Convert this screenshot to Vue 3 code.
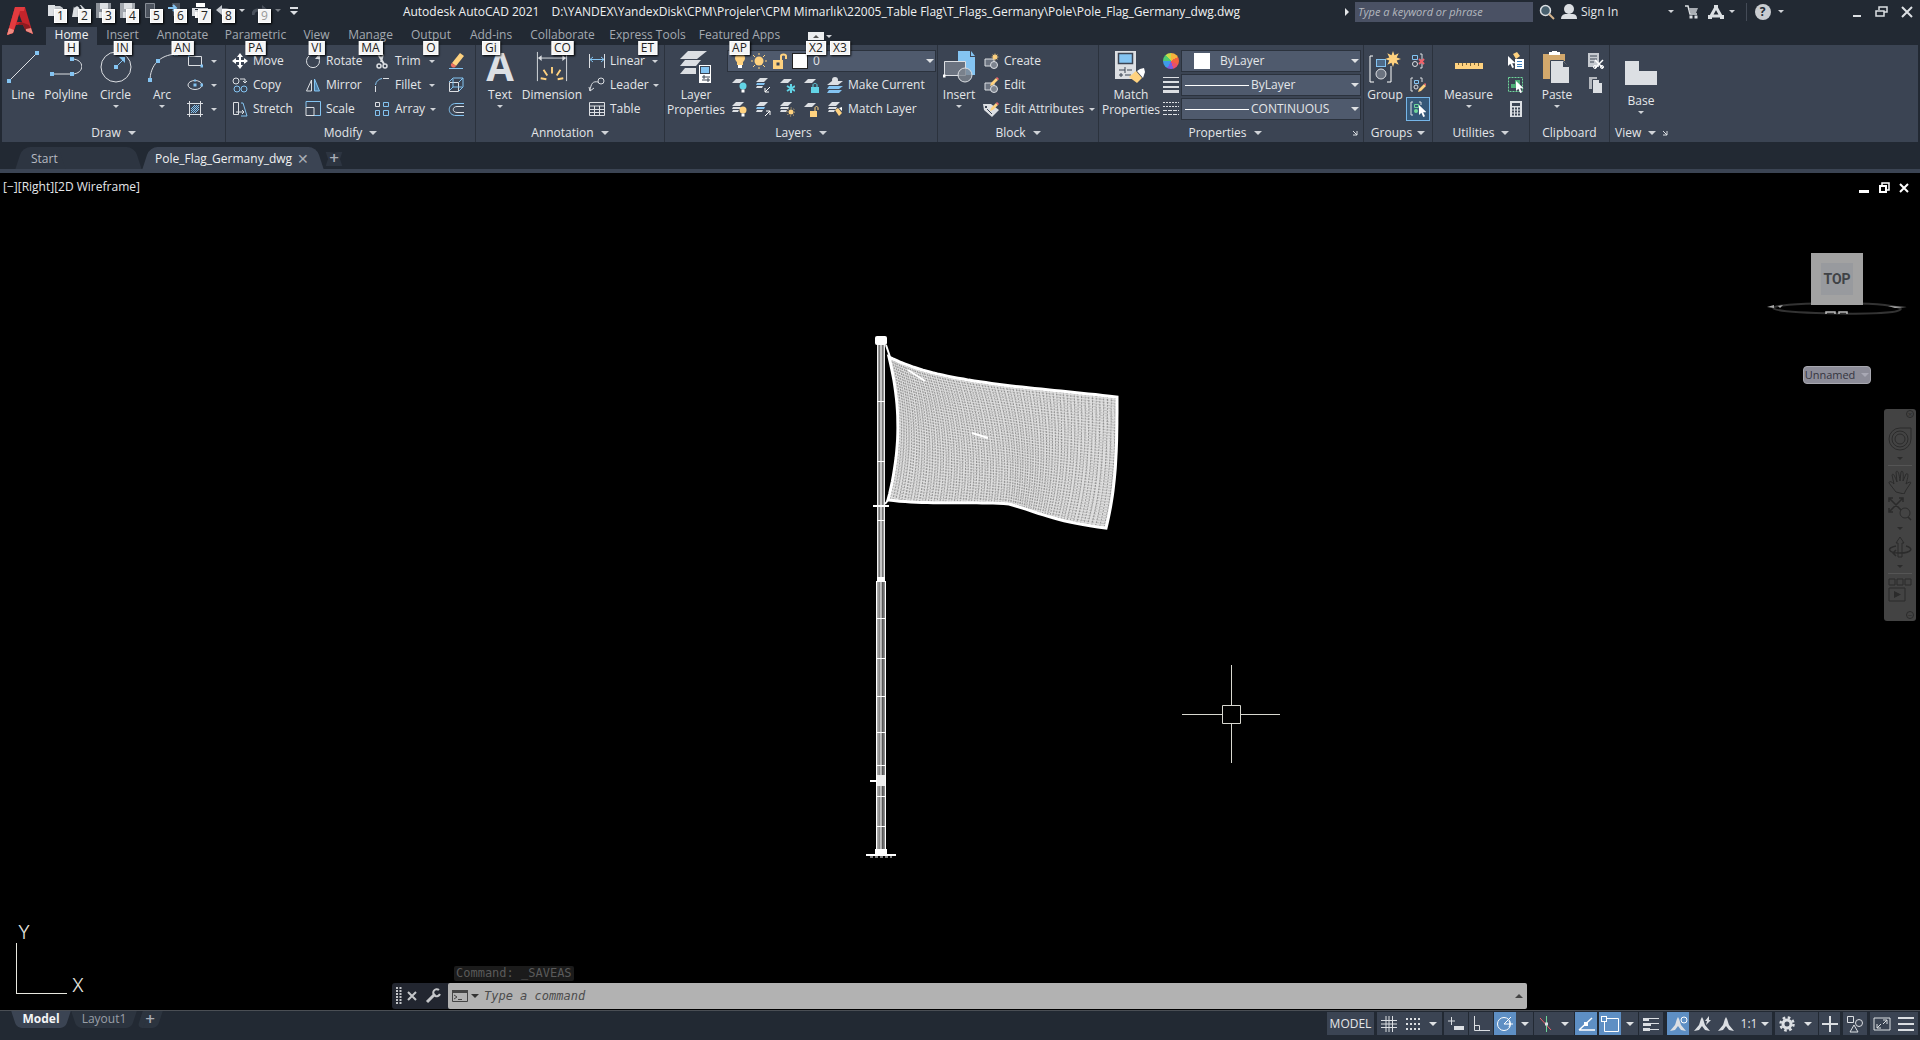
<script setup>
import { h } from 'vue'

const W = '#dcdfe3'
const B = '#84c4f2'
const Y = '#ffd27f'
const G = '#6fd79a'
const R = '#f0626a'
const C = '#62d4e6'
const D = '#3b4453'

const dot = (x, y, c = B, s = 4) => `<rect x="${x - s / 2}" y="${y - s / 2}" width="${s}" height="${s}" fill="${c}"/>`
const line = (d, c = W, w = 1) => `<path d="${d}" stroke="${c}" stroke-width="${w}"/>`
const fill = (d, c = W) => `<path d="${d}" fill="${c}"/>`
const sheet = (y, c = W) => fill(`M5 ${y}h8l-4 4h-8z`, c)
const sheets = (c = W) => fill('M5 1h8l-4 4H1z', W) + fill('M2 6h8l-1 2H1z', c) + fill('M2 9h6l-1 2H1z', W)
const star = (x, y, r, c = Y) => {
  let d = ''
  for (let i = 0; i < 16; i++) {
    const a = (i * Math.PI) / 8
    const q = i % 2 ? r * 0.5 : r
    d += `${i ? 'L' : 'M'}${(x + q * Math.sin(a)).toFixed(1)} ${(y - q * Math.cos(a)).toFixed(1)}`
  }
  return fill(d + 'z', c)
}
const pencil = (x, y) =>
  fill(`M${x} ${y}l1-3 5-5 2 2-5 5z`, Y) + fill(`M${x + 6} ${y - 8}l1-1 2 2-1 1z`, R)
const cursor = (x, y) => fill(`M${x} ${y}v10l2.4-2.2 1.8 4.2 1.8-.8-1.8-4h3.4z`, '#fff')
const blockShape =
  `<path d="M2 6h9v7H2z" fill="#6b7380" stroke="${W}"/><circle cx="11" cy="12" r="3.5" fill="#7d848f" stroke="${W}"/>`
const annot = (extra) => fill('M10 1c2 3 2 6 3 8l5 6-5-1-3-4-3 4-5 1 5-6c1-2 1-5 3-8z') + extra

const icons = {
  logo: [26, 28,
    fill('M8 0h10l8 27-7-3-3-6h-7l-3 8-6 2z', '#c4242b') + fill('M12 7l3 8h-5z', '#222933') +
    fill('M8 0l-8 28 6-2L13 4l4 0 1-4z', '#e23b3f') + fill('M16 18l-6 0 4-3 8 3 4 9-7-3z', '#8e1b20') + fill('M0 28l2-7 5 2-1 3z', '#f08a80') + fill('M26 27l-2-6-5 1 0 2z', '#ee8a82')],
  new: [16, 16, fill('M0 2h7v11H0z') + fill('M7 3h5l3 2v9H7z', '#c8ccd1')],
  open: [16, 16, fill('M2 3l7-1 5 5-8 7H0z') + line('M2 4c3-3 6-2 7 3', '#222933', 2)],
  save: [16, 16, fill('M0 0h15v15H0z', '#8c9199') + fill('M4 0h8v6H4z') + fill('M3 9h10v6H3z')],
  saveas: [16, 16, fill('M0 0h15v15H0z', '#a3a8af') + fill('M4 0h8v6H4z') + fill('M3 9h10v6H3z') + line('M7 14l7-8', '#ffffff', 2)],
  mobile: [16, 16, '<path d="M1.500.500h9v14h-9z" fill="#4c535e" stroke="#878d96"/>'],
  cloud: [16, 16, fill('M4 0h8v13H5z', '#4c535e') + line('M0 5h7M5 2l3 3-3 3', B, 2)],
  print: [16, 16, fill('M4 0h9v4H4z', '#fff') + fill('M0 5h16v8H0z') + line('M3 6.500h10', '#222933') + fill('M3 9h10v6H3z', '#fff')],
  undo: [16, 16, fill('M0 7l6-5v10z', '#c4c8ce') + line('M5 7h5c3 0 5 1 5 5', '#c4c8ce', 3)],
  redo: [16, 16, fill('M16 7l-6-5v10z', '#4a515c') + line('M11 7H6c-3 0-5 1-5 5', '#4a515c', 3)],
  custom: [10, 10, fill('M1 1h8v2H1z') + fill('M1 5h8L5 9z')],
  search: [16, 16, `<circle cx="6.500" cy="6.500" r="5" fill="#48606e" stroke="${W}" stroke-width="1.500"/>` + line('M10 10l5 5', '#d5b48c', 2)],
  user: [18, 16, `<circle cx="9" cy="5" r="5" fill="${W}"/>` + fill('M1 15c0-4 3-5 5-5h6c3 0 5 1 5 5z')],
  cart: [14, 14, line('M0 1h3l2 8h7', W, 1.5) + fill('M4 3h9l-2 5H5z', '#a9adb3') + dot(6, 12, W, 3) + dot(11, 12, W, 3)],
  app: [16, 14, line('M8 2L3 11h10z', W, 3) + dot(8, 2, W, 4) + dot(2, 12, W, 4) + dot(14, 12, W, 4)],
  min: [10, 12, fill('M1 9h8v2H1z')],
  restore: [13, 12, `<path d="M4 4V1h8v5H9M1 5h8v5H1z" stroke="${W}" stroke-width="1.500"/>`],
  close: [12, 12, line('M1 1l10 10M11 1L1 11', W, 2)],
  line: [32, 32, line('M2 30L30 2', W) + dot(2, 30) + dot(30, 2)],
  polyline: [32, 32, line('M2 23h20c13 0 13-15 0-15', W) + dot(2, 23) + dot(22, 23) + dot(22, 8)],
  circle: [32, 32, `<circle cx="16" cy="16" r="15" stroke="${W}"/>` + line('M16 16l7-7', B) + fill('M25 6v6l-6-6z', B) + dot(16, 16)],
  arc: [32, 32, line('M4 30C4 14 14 4 30 3', W) + dot(4, 29) + dot(12, 10) + dot(30, 3)],
  rect: [16, 16, line('M1.500 3.500h13v9h-13z') + dot(2, 3, B, 2) + dot(15, 13, B, 3)],
  ellipse: [16, 16, `<ellipse cx="8" cy="8" rx="7" ry="4.500" stroke="${W}"/>` + dot(8, 8, B, 3) + dot(15, 8, B, 3) + dot(8, 3.5, B, 2)],
  hatch: [16, 16, line('M0 2.500h16M0 13.500h16M2.500 0v16M13.500 0v16') + line('M4 8l4-4M4 12l8-8M8 12l4-4M4 10l6-6M6 12l6-6', B)],
  move: [16, 16, line('M8 2v12M2 8h12', '#fff', 2) + fill('M8 0l3 4H5zM8 16l3-4H5zM0 8l4-3v6zM16 8l-4-3v6z', '#fff')],
  copy: [16, 16, `<circle cx="4" cy="4" r="3" stroke="${W}"/><circle cx="5" cy="12" r="3" stroke="${B}"/><circle cx="12" cy="12" r="3" stroke="${B}"/>` + line('M8 2h5v4M11 4l2 2 2-2')],
  stretch: [16, 16, line('M1.500 1.500h5v12h-5zM4 11h8M10 9l2 2-2 2') + line('M9 2h2l4 13H9', B)],
  rotate: [16, 16, line('M4 3a6.500 6.500 0 1 0 8 0', W) + fill('M15 0v6h-5z')],
  mirror: [16, 16, line('M6.500 3v11h-5z') + `<path d="M9.500 2v12h5z" stroke="${B}" fill="#4e7fa6"/>`],
  scale: [16, 16, line('M1 6.500V.5h14.500v14H9', B) + line('M1 6.500h8v8H1z')],
  trim: [16, 16, line('M4 1l6 10M9 1L7 9', W, 2) + `<circle cx="5" cy="13" r="2" stroke="${W}" stroke-width="1.500"/><circle cx="11" cy="13" r="2" stroke="${W}" stroke-width="1.500"/>`],
  fillet: [16, 16, line('M1.500 15V9M9 1.500h6') + line('M1.500 8C2 4 5 2 8 1.500', B)],
  array: [16, 16, line('M1.500 1.500h4v4h-4z') + line('M9.500 1.500h5v4h-5zM1.500 9.500h4v5h-4zM9.500 9.500h5v5h-5z', B)],
  erase: [16, 16, fill('M4 10l8-10 4 3-8 10z', Y) + fill('M4 10l4 3c-2 3-6 1-5-2z', '#f07060') + line('M1 15.500h14', B)],
  explode: [16, 16, line('M1.500 5.500h9v9h-9z') + line('M1 5l4-4h10v9l-4 4M11 5l4-4M5 2v8h9M5 10l-3 3', B)],
  offset: [16, 16, line('M16 5.500H9c-5 0-5 6 0 6h7') + line('M16 2.500H8c-9 0-9 12 0 12h8', B)],
  text: [28, 32, `<text x="14" y="30" font-family="Open Sans, sans-serif" font-weight="700" font-size="40" text-anchor="middle" fill="${W}">A</text>`],
  dimension: [34, 34, line('M1.500 1v31M32.500 1v31M3 7.500h28') + fill('M2 7.500l4-3v6zM32 7.500l-4-3v6z') + line('M17 17v7M8 20l4 6M26 20l-4 6M5 29l6 1M29 29l-6 1', Y, 2)],
  linear: [18, 16, line('M1.500 1v14M16.500 1v14') + line('M2 6.500h14M5 4L2 6.500 5 9M13 4l3 2.500L13 9', B)],
  leader: [18, 16, line('M2 14C3 6 5 4 10 5M2 14l-1-4M2 14l4-3') + `<circle cx="13" cy="4" r="3" stroke="${W}"/>`],
  table: [18, 16, line('M1.500 1.500h15v13h-15zM1 5h16M1 8.500h16M1 11.500h16M6.500 5v10M11.500 5v10')],
  layerprops: [32, 32, fill('M8 0h19L17 8H0z') + fill('M5 9h16l-5 6H0z') + fill('M5 17h11v6H0z') +
    `<rect x="19" y="14" width="12" height="18" fill="#fff"/><rect x="20.500" y="15.500" width="9" height="7" fill="${B}" stroke="${D}"/>` + line('M22 26h8M22 29h8M24 24v4M28 27v4', D)],
  bulb: [12, 16, `<circle cx="6" cy="5" r="5" fill="${Y}"/>` + fill('M3 9h6v3H3z', Y) + fill('M4 12h4v3H4z', '#fff')],
  sun: [16, 16, `<circle cx="8" cy="8" r="4.500" fill="${Y}"/>` + line('M8 0v2M8 14v2M0 8h2M14 8h2M2 2l2 2M12 12l2 2M14 2l-2 2M4 12l-2 2', Y)],
  unlock: [16, 16, fill('M1 7h10v9H1z', Y) + line('M9 7V3c0-2 5-2 5 0v3', Y, 2) + dot(6, 11, D, 3)],
  loff: [16, 16, sheet(2) + `<circle cx="12" cy="9" r="3.500" fill="${C}"/>` + dot(12, 14, '#fff', 3)],
  liso: [16, 16, sheets(B) + line('M15 10l-5 5M10 11v4h4', '#fff')],
  lfreeze: [16, 16, sheet(2) + line('M12 7v9M8 9l8 5M16 9l-8 5', C, 2)],
  llock: [16, 16, sheet(2) + fill('M8 10h8v6H8z', C) + line('M10 10V8c0-2 4-2 4 0v2', C)],
  lcur: [16, 16, fill('M5 4h11l-5 4H0z') + fill('M2 9h14l-4 3H0z', B) + fill('M2 13h13l-3 3H0z', B) + `<circle cx="8" cy="3" r="3" fill="${W}"/>`],
  lon: [16, 16, sheets() + `<circle cx="12" cy="9" r="3.500" fill="${Y}"/>` + dot(12, 14, '#fff', 3)],
  luniso: [16, 16, sheets(B) + line('M10 15l5-5M11 10h4v4', '#fff')],
  lthaw: [16, 16, sheets() + `<circle cx="12" cy="11" r="2.500" fill="${Y}"/><circle cx="12" cy="11" r="4" stroke="${Y}" stroke-dasharray="1 2"/>`],
  lunlock: [16, 16, sheet(2) + fill('M7 10h7v6H7z', Y) + line('M12 10V7c0-2 3-2 3 0v2', Y)],
  lmatch: [16, 16, sheets() + fill('M8 9l3-2 4 5-3 3z', Y) + fill('M12 7l3-1 0 4z', '#fff')],
  insert: [32, 32, fill('M15 0h12v6h5v18H15z', B) + fill('M28 0l4 5h-4z', B) + `<path d="M1.500 10.500h21v14h-21z" fill="#6b7380" stroke="${W}"/><circle cx="22" cy="24" r="7" fill="#7d848f" fill-opacity=".8" stroke="${W}"/>` + dot(1, 25, '#fff', 3)],
  create: [16, 16, blockShape + star(12, 4, 4)],
  edit: [16, 16, blockShape + pencil(7, 9)],
  editattr: [16, 16, fill('M0 3h8l8 6-7 7-8-7z') + line('M4 8l5 5', D) + dot(3, 6, D, 2) + pencil(7, 10)],
  matchprops: [32, 32, fill('M0 0h21v28H0z') + `<rect x="3.500" y="2.500" width="14" height="10" fill="${B}" stroke="${D}" stroke-width="1.500"/>` + line('M4 19h6M12 19h5M4 24h4M10 24h6M10 16v6M6 22v4', D) + fill('M14 26l7-6 6 7-5 5z', Y) + fill('M22 20l3-2 4-1 1 4-2 6z', '#fff')],
  weights: [16, 16, fill('M0 0h16v1H0zM0 4h16v2H0zM0 9h16v2H0zM0 13h16v3H0z')],
  types: [16, 16, `<path d="M0 1.500h16M0 5.500h16" stroke="${W}" stroke-dasharray="2 1"/><path d="M0 9.500h16M0 13.500h16" stroke="${W}" stroke-dasharray="4 1"/>`],
  group: [32, 32, line('M4 5H1v26h4M18 31h4V15', '#fff') + `<rect x="7.500" y="8.500" width="9" height="7" fill="#4e6a88" stroke="${B}"/><circle cx="12" cy="23" r="5" fill="#6b7380" stroke="${W}"/>` + star(24, 8, 8)],
  ungroup: [16, 16, line('M2.500 2.500h5v4h-5z', B) + `<circle cx="5" cy="11" r="2.500" stroke="${W}"/>` + line('M10 1h2v14h-2') + line('M9 6l5 5M14 6l-5 5', R, 2)],
  groupedit: [16, 16, line('M3 1H1v13h2M10 1h2v4') + line('M4.500 3.500h4v3h-4z', B) + `<circle cx="6" cy="10" r="2" stroke="${W}"/>` + pencil(8, 15)],
  groupsel: [16, 16, line('M3 1H1v13h2M9 1h2v3') + line('M4.500 3.500h4v3h-4z', G) + `<circle cx="6" cy="10" r="2" fill="${G}"/>` + cursor(9, 4)],
  measure: [30, 16, fill('M1 4h28v6H1z', Y) + line('M4.500 4v2M8.500 4v3M12.500 4v2M16.500 4v3M20.500 4v2M24.500 4v3', '#7a6439')],
  quicksel: [18, 18, fill('M6 2l4-2 3 4-4 3z', Y) + cursor(1, 4) + `<rect x="8" y="7" width="9" height="10" fill="#fff"/>` + line('M10 9.500h5M10 12.500h5M10 14.500h5', '#3a7fc0')],
  selall: [18, 18, `<path d="M1.500 1.500h14v14h-14z" stroke="${G}" stroke-dasharray="2 1"/>` + fill('M4 8h4V4h5v8H4z', '#4fae78') + cursor(9, 5)],
  calc: [14, 18, fill('M1 1h12v16H1z') + fill('M3 3h8v3H3z', D) + line('M3 8.500h8M3 11.500h8M3 14.500h8', D, 2) + line('M5.500 7v9M8.500 7v9', W)],
  paste: [28, 32, fill('M0 3h22v25H0z', '#d2a86c') + fill('M6 4h11V1h-3V0H9v1H6z', '#fff') + `<path d="M7.500 9.500h13l6 6v17h-19z" fill="${W}" stroke="${D}"/>` + fill('M20 10v6h7z', D)],
  cut: [18, 18, fill('M1 1h11v14H1z', '#c6cad0') + line('M3 4h7M3 7h7M3 10h4', D) + line('M8 8l8 8M16 8l-8 8', '#fff', 1.5) + `<circle cx="8" cy="15" r="1.500" stroke="#fff"/><circle cx="15" cy="15" r="1.500" stroke="#fff"/>`],
  copyclip: [14, 18, fill('M0 1h8v12H0z', '#b3b7bd') + `<path d="M3.500 3.500h7l3 3v11h-10z" fill="${W}" stroke="${D}"/>` + fill('M10 3v4h4z', D)],
  base: [32, 24, fill('M0 0h14v10h18v14H0z')],
  launcher: [6, 6, line('M1 1l4 4M5 1v4H1')],
  vrestore: [12, 12, `<path d="M4 3V1h7v7H9" stroke="#fff" stroke-width="1.500"/><path d="M2 4h6v6H2z" stroke="#fff" stroke-width="2"/>`],
  vmin: [12, 12, fill('M1 8h10v3H1z', '#fff')],
  vclose: [12, 12, line('M2 2l8 8M10 2l-8 8', '#fff', 2)],
  wheel: [24, 24, '<path d="M12 1h11v11A11 11 0 1 1 12 1z" stroke="#2b2b2b"/><circle cx="12" cy="12" r="8" stroke="#2b2b2b"/><circle cx="12" cy="12" r="5" stroke="#2b2b2b"/>'],
  hand: [24, 24, '<path d="M8 22L1 13c0-2 2-2 5 1L4 5c1-2 2-1 5 7L8 2c1-2 3-1 4 9l1-9c1-2 3-1 2 9l3-7c2-1 3 0 0 10 4-3 6-2 4 0l-4 6-2 4z" stroke="#2b2b2b"/>'],
  zoomext: [24, 24, '<path d="M1 1l14 14M15 1L1 15M1 5V1h4M11 1h4v4M1 11v4h4M19 19l4 4" stroke="#2b2b2b" stroke-width="1.500"/><circle cx="17" cy="16" r="5" fill="#444" stroke="#2b2b2b"/>'],
  orbit: [24, 24, '<path d="M10 22V8H8l4-6 4 6h-2v14z" stroke="#2b2b2b"/><path d="M8 11C-2 13 0 18 12 18s14-5 6-7M8 15l-3 3 3 3" stroke="#2b2b2b" stroke-width="1.500"/>'],
  motion: [24, 24, '<path d="M1 1h6v6H1zM9 1h6v6H9zM17 1h6v6h-6zM1 10h16v13H1z" stroke="#2b2b2b"/><path d="M6 13v7l7-3.500z" fill="#2b2b2b"/>'],
  wrench: [16, 16, line('M2 14l8-8', '#c4c6c9', 3) + `<path d="M14 2a3.500 3.500 0 1 0 1 4" stroke="#c4c6c9" stroke-width="2"/>`],
  cmdclose: [10, 10, line('M1 1l8 8M9 1L1 9', '#c4c6c9', 2)],
  grip: [6, 18, '<path d="M1 0v18M4.500 0v18" stroke="#c4c6c9" stroke-width="2" stroke-dasharray="2 1"/>'],
  prompt: [16, 12, '<path d="M.5.500h15v11H.500z" stroke="#444"/><path d="M0 0h16v3H0z" fill="#444"/><path d="M2 5l3 2-3 2M6 9.500h4" stroke="#444"/>'],
  sgrid: [16, 16, line('M5 0v16M8 0v16M11.500 0v16M0 4.500h16M0 8h16M0 11.500h16')],
  ssnap: [14, 14, [1, 5, 9, 13].map((x) => [2, 7, 12].map((y) => dot(x, y, W, 2)).join('')).join('')],
  sdyn: [18, 16, line('M1 5h7M4.500 1v8') + fill('M7 10h10v4H7z')],
  sortho: [18, 18, line('M2.500 1v14.500H18M2.500 10.500h5v5')],
  spolar: [18, 18, `<circle cx="8" cy="9" r="6.500" stroke="#fff"/>` + line('M8 9h9M8 9l7-7M13 6c1 2 1 4 0 6', '#fff')],
  siso: [14, 16, line('M2 2l11 12', R) + line('M8.500 0v16', G) + dot(8.5, 8, W, 3)],
  strack: [18, 16, line('M2 14h16M2 14L15 2', '#fff', 1.5) + dot(9, 8, '#fff', 4)],
  sosnap: [18, 18, line('M3.500 3.500h14v13h-14z', '#fff') + `<rect x=".5" y="1.500" width="5" height="5" fill="#5e8fc4" stroke="#fff"/>`],
  slwt: [18, 16, fill('M1 2h6v3H1zM7 2h10v1H7zM1 7h8v3H1zM9 7h8v1H9zM1 12h7v3H1zM8 13h9v1H8z')],
  sann: [20, 16, annot(`<circle cx="16" cy="4" r="3" stroke="#fff" fill="#5e8fc4"/>`)],
  sann2: [20, 16, annot(fill('M17 0l-4 5h2l-1 4 5-5h-2z'))],
  sann3: [20, 16, annot('')],
  sgear: [16, 16, `<circle cx="8" cy="8" r="4" stroke="${W}" stroke-width="3"/><circle cx="8" cy="8" r="6.500" stroke="${W}" stroke-width="2.500" stroke-dasharray="2.600 2.500"/>`],
  splus: [18, 18, line('M9 1v16M1 9h16', W, 2)],
  sshapes: [18, 18, `<path d="M1.500 1.500h6v6h-6zM8 10l4 7H4z" stroke="${W}"/><circle cx="13" cy="8" r="3.500" stroke="${W}"/>`],
  sclean: [18, 14, line('M1 1h16v12H1z') + line('M4 11l4-4M14 3l-4 4M4 7v4h4M10 3h4v4')],
  smenu: [18, 16, fill('M1 1h16v2H1zM1 7h16v2H1zM1 13h16v2H1z')],
}

const Icon = (props) => {
  const [w, hgt, body] = icons[props.name]
  return h('svg', {
    viewBox: `0 0 ${w} ${hgt}`, width: w, height: hgt, fill: 'none',
    'aria-hidden': 'true', innerHTML: body,
  })
}
Icon.props = ['name']

const quick = [
  ['new', 'New', '1'], ['open', 'Open', '2'], ['save', 'Save', '3'], ['saveas', 'Save As', '4'],
  ['mobile', 'Open from Web', '5'], ['cloud', 'Save to Web', '6'], ['print', 'Plot', '7'], ['undo', 'Undo', '8'],
]
const tabs = [
  ['Home', 'H'], ['Insert', 'IN'], ['Annotate', 'AN'], ['Parametric', 'PA'], ['View', 'VI'], ['Manage', 'MA'],
  ['Output', 'O'], ['Add-ins', 'Gi'], ['Collaborate', 'CO'], ['Express Tools', 'ET'], ['Featured Apps', 'AP'],
]
const modify = [
  [['move', 'Move'], ['copy', 'Copy'], ['stretch', 'Stretch']],
  [['rotate', 'Rotate'], ['mirror', 'Mirror'], ['scale', 'Scale']],
  [['trim', 'Trim', 1], ['fillet', 'Fillet', 1], ['array', 'Array', 1]],
]
const annotation = [['linear', 'Linear', 1], ['leader', 'Leader', 1], ['table', 'Table']]
const block = [['create', 'Create'], ['edit', 'Edit'], ['editattr', 'Edit Attributes', 1]]
const layerTools = [
  [['loff', 'Off'], ['liso', 'Isolate'], ['lfreeze', 'Freeze'], ['llock', 'Lock'], ['lcur', 'Make Current', 1]],
  [['lon', 'Turn All On'], ['luniso', 'Unisolate'], ['lthaw', 'Thaw'], ['lunlock', 'Unlock'], ['lmatch', 'Match Layer', 1]],
]
const status = [
  { i: 'sgrid', w: 24, g: 3 }, { i: 'ssnap', w: 23 }, { w: 18 },
  { i: 'sdyn', w: 24, g: 2 }, { i: 'sortho', w: 24, g: 1 }, { i: 'spolar', w: 22, g: 1, on: true }, { w: 17 },
  { i: 'siso', w: 22, g: 1 }, { w: 18 }, { i: 'strack', w: 22, g: 1, on: true },
  { i: 'sosnap', w: 22, g: 2, on: true }, { w: 17 }, { i: 'slwt', w: 24, g: 1 },
  { i: 'sann', w: 22, g: 4, on: true }, { i: 'sann2', w: 25 }, { i: 'sann3', w: 24 }, { t: '1:1', w: 34 },
  { i: 'sgear', w: 23, g: 3 }, { w: 20 }, { i: 'splus', w: 21, g: 1 },
  { i: 'sshapes', w: 24, g: 3 }, { i: 'sclean', w: 24, g: 3 }, { i: 'smenu', w: 24 },
]

/* Flag cloth: a mesh blended between four boundary curves. */
const bez = (p, t) => {
  const s = 1 - t
  const k = [s * s * s, 3 * s * s * t, 3 * s * t * t, t * t * t]
  return [0, 1].map((a) => p.reduce((sum, q, i) => sum + q[a] * k[i], 0))
}
const top = [[19, 22], [70, 48], [150, 51], [247, 62]]
const right = [[247, 62], [247, 105], [247, 150], [236, 193]]
const left = [[19, 22], [31, 70], [31, 115], [18, 165]]
const bottomAt = (t) => (t < 0.55
  ? bez([[18, 165], [60, 170], [100, 166], [139, 169]], t / 0.55)
  : bez([[139, 169], [165, 176], [185, 187], [236, 193]], (t - 0.55) / 0.45))
const mesh = (u, v) => {
  const t = bez(top, u), b = bottomAt(u), l = bez(left, v), r = bez(right, v)
  return [0, 1].map((a) =>
    ((1 - v) * t[a] + v * b[a] + (1 - u) * l[a] + u * r[a] -
    ((1 - u) * (1 - v) * top[0][a] + u * (1 - v) * top[3][a] + (1 - u) * v * left[3][a] + u * v * right[3][a])).toFixed(1))
}
const run = (n, f) => Array.from({ length: n + 1 }, (_, i) => `${i ? 'L' : 'M'}${f(i / n).join(' ')}`).join('')
const COLS = 76
const ROWS = 48
const warp = Array.from({ length: COLS }, (_, i) => run(24, (v) => mesh((i + 0.5) / COLS, v))).join('')
const weft = Array.from({ length: ROWS }, (_, i) => run(40, (u) => mesh(u, (i + 0.5) / ROWS))).join('')
const outline = run(40, (u) => mesh(u, 0)) + run(24, (v) => mesh(1, v)).replace('M', 'L') +
  run(40, (u) => mesh(1 - u, 1)).replace('M', 'L') + run(24, (v) => mesh(0, 1 - v)).replace('M', 'L') + 'z'
</script>

<template>
  <div class="app">
    <header class="head">
      <button class="logo" aria-label="Application menu"><Icon name="logo" /></button>
      <div class="head-rows">
        <div class="title-bar">
          <div class="quick">
            <button v-for="q in quick" :key="q[2]" :aria-label="q[1]"><Icon :name="q[0]" /><kbd>{{ q[2] }}</kbd></button>
            <button class="thin" aria-label="Undo list"><i class="caret" /></button>
            <button class="dim" aria-label="Redo"><Icon name="redo" /><kbd>9</kbd></button>
            <button class="thin dim" aria-label="Redo list"><i class="caret" /></button>
            <button class="thin" aria-label="Customize toolbar"><Icon name="custom" /></button>
          </div>
          <h1><span>Autodesk AutoCAD 2021</span><span>D:\YANDEX\YandexDisk\CPM\Projeler\CPM Mimarlık\22005_Table Flag\T_Flags_Germany\Pole\Pole_Flag_Germany_dwg.dwg</span></h1>
          <div class="account">
            <button class="expand" aria-label="Collapse search"><i /></button>
            <input type="text" aria-label="Search" placeholder="Type a keyword or phrase">
            <button class="find" aria-label="Find"><Icon name="search" /></button>
            <button class="sign"><Icon name="user" />Sign In<i class="caret" /></button>
            <button class="cart" aria-label="Store"><Icon name="cart" /></button>
            <button class="apps" aria-label="Apps"><Icon name="app" /><i class="caret" /></button>
            <button class="help" aria-label="Help"><b>?</b><i class="caret" /></button>
          </div>
          <div class="window">
            <button aria-label="Minimize"><Icon name="min" /></button>
            <button aria-label="Restore"><Icon name="restore" /></button>
            <button aria-label="Close"><Icon name="close" /></button>
          </div>
        </div>
        <nav class="tabs">
          <button v-for="(t, n) in tabs" :key="t[0]" :class="{ on: n === 0 }">{{ t[0] }}<kbd>{{ t[1] }}</kbd></button>
          <button class="fold" aria-label="Minimize ribbon"><span class="fold-box"><i /></span><kbd>X2</kbd></button>
          <button class="fold-more" aria-label="Ribbon options"><i class="caret" /><kbd>X3</kbd></button>
        </nav>
      </div>
    </header>

    <main class="ribbon">
      <section class="draw">
        <div class="body">
          <button class="big"><Icon name="line" />Line</button>
          <button class="big"><Icon name="polyline" />Polyline</button>
          <button class="big"><Icon name="circle" />Circle<i class="caret" /></button>
          <button class="big"><Icon name="arc" />Arc<i class="caret" /></button>
          <div class="col">
            <button v-for="n in ['rect', 'ellipse', 'hatch']" :key="n" class="small" :aria-label="n"><Icon :name="n" /><i class="caret" /></button>
          </div>
        </div>
        <button class="name">Draw<i /></button>
      </section>

      <section class="modify">
        <div class="body">
          <div v-for="(c, n) in modify" :key="n" class="col">
            <button v-for="b in c" :key="b[1]" class="small"><Icon :name="b[0]" />{{ b[1] }}<i v-if="b[2]" class="caret" /></button>
          </div>
          <div class="col">
            <button v-for="n in ['erase', 'explode', 'offset']" :key="n" class="small" :aria-label="n"><Icon :name="n" /></button>
          </div>
        </div>
        <button class="name">Modify<i /></button>
      </section>

      <section class="annotation">
        <div class="body">
          <button class="big"><Icon name="text" />Text<i class="caret" /></button>
          <button class="big"><Icon name="dimension" />Dimension</button>
          <div class="col">
            <button v-for="b in annotation" :key="b[1]" class="small"><Icon :name="b[0]" />{{ b[1] }}<i v-if="b[2]" class="caret" /></button>
          </div>
        </div>
        <button class="name">Annotation<i /></button>
      </section>

      <section class="layers">
        <div class="body">
          <button class="big two"><Icon name="layerprops" /><span>Layer<br>Properties</span></button>
          <div class="col">
            <div class="combo layer-combo">
              <Icon name="bulb" /><Icon name="sun" /><Icon name="unlock" /><span class="swatch" />
              <select aria-label="Layer"><option>0</option></select>
            </div>
            <div v-for="(r, n) in layerTools" :key="n" class="tools">
              <button v-for="b in r" :key="b[0]" class="small" :aria-label="b[1]"><Icon :name="b[0]" /><template v-if="b[2]">{{ b[1] }}</template></button>
            </div>
          </div>
        </div>
        <button class="name">Layers<i /></button>
      </section>

      <section class="block">
        <div class="body">
          <button class="big"><Icon name="insert" />Insert<i class="caret" /></button>
          <div class="col">
            <button v-for="b in block" :key="b[1]" class="small"><Icon :name="b[0]" />{{ b[1] }}<i v-if="b[2]" class="caret" /></button>
          </div>
        </div>
        <button class="name">Block<i /></button>
      </section>

      <section class="properties">
        <div class="body">
          <button class="big two"><Icon name="matchprops" /><span>Match<br>Properties</span></button>
          <div class="props">
            <span class="wheel" /><div class="combo"><span class="swatch" /><select aria-label="Object color" class="color"><option>ByLayer</option></select></div>
            <Icon name="weights" /><div class="combo"><span class="stroke" /><select aria-label="Lineweight"><option>ByLayer</option></select></div>
            <Icon name="types" /><div class="combo"><span class="stroke" /><select aria-label="Linetype"><option>CONTINUOUS</option></select></div>
          </div>
        </div>
        <div class="foot"><button class="name">Properties<i /></button><button class="launch" aria-label="Properties settings"><Icon name="launcher" /></button></div>
      </section>

      <section class="groups">
        <div class="body">
          <button class="big"><Icon name="group" />Group</button>
          <div class="col">
            <button class="small" aria-label="Ungroup"><Icon name="ungroup" /></button>
            <button class="small" aria-label="Group edit"><Icon name="groupedit" /></button>
            <button class="small on" aria-label="Group selection"><Icon name="groupsel" /></button>
          </div>
        </div>
        <button class="name">Groups<i /></button>
      </section>

      <section class="utilities">
        <div class="body">
          <button class="big"><Icon name="measure" />Measure<i class="caret" /></button>
          <div class="col">
            <button v-for="n in ['quicksel', 'selall', 'calc']" :key="n" class="small" :aria-label="n"><Icon :name="n" /></button>
          </div>
        </div>
        <button class="name">Utilities<i /></button>
      </section>

      <section class="clipboard">
        <div class="body">
          <button class="big"><Icon name="paste" />Paste<i class="caret" /></button>
          <div class="col">
            <button v-for="n in ['cut', 'copyclip']" :key="n" class="small" :aria-label="n"><Icon :name="n" /></button>
          </div>
        </div>
        <button class="name">Clipboard</button>
      </section>

      <section class="view">
        <div class="body">
          <button class="big"><Icon name="base" />Base<i class="caret" /></button>
        </div>
        <div class="foot"><button class="name">View<i /></button><button class="launch" aria-label="View settings"><Icon name="launcher" /></button></div>
      </section>
    </main>

    <nav class="files">
      <button class="file start"><span>Start</span></button>
      <button class="file on"><span>Pole_Flag_Germany_dwg</span><em>✕</em></button>
      <button class="file add" aria-label="New drawing"><span>+</span></button>
    </nav>

    <div class="canvas">
      <div class="canvas-top">
        <span>[−][Right][2D Wireframe]</span>
        <div class="view-window">
          <button aria-label="Minimize view"><Icon name="vmin" /></button>
          <button aria-label="Restore view"><Icon name="vrestore" /></button>
          <button aria-label="Close view"><Icon name="vclose" /></button>
        </div>
      </div>

      <svg class="flag" viewBox="-10 0 270 530" width="270" height="530" fill="none" aria-label="Flag on a pole">
        <defs>
          <linearGradient id="tube">
            <stop offset="0" stop-color="#fff" /><stop offset=".15" stop-color="#aaa" /><stop offset=".35" stop-color="#888" />
            <stop offset=".5" stop-color="#ddd" /><stop offset=".65" stop-color="#555" /><stop offset=".85" stop-color="#888" /><stop offset="1" stop-color="#fff" />
          </linearGradient>
        </defs>
        <rect x="7" y="8" width="8" height="235" fill="#9c9c9c" />
        <path d="M7.500 8v235M11 8v235M14.500 8v235" stroke="#eee" />
        <path d="M9.500 8v235M12.500 8v235" stroke="#777" />
        <rect x="6" y="246" width="10" height="268" fill="url(#tube)" />
        <path d="M6.500 246v268M15.500 246v268" stroke="#fff" />
        <rect x="5" y="1" width="12" height="9" rx="2" fill="#fff" />
        <rect x="7" y="242" width="8" height="5" fill="#fff" />
        <path d="M7 66.500h8M7 126.500h8M7 185.500h8M6 283.500h10M6 323.500h10M6 361.500h10M6 397.500h10M6 430.500h10M6 461.500h10M6 491.500h10" stroke="#fff" />
        <path d="M3 171h16M15 169l4-5M16 10l4 12" stroke="#fff" stroke-width="2" />
        <path d="M0 446h6" stroke="#fff" stroke-width="2" />
        <rect x="7" y="440" width="8" height="11" fill="#eee" />
        <rect x="5" y="514" width="12" height="5" fill="#fff" />
        <path d="M-4 520h30" stroke="#fff" stroke-width="2" /><path d="M0 522h22" stroke="#fff" stroke-dasharray="3 2" />
        <path :d="outline" fill="#dedede" />
        <path :d="weft" stroke="#999" stroke-opacity=".5" stroke-dasharray="3 2" />
        <path :d="warp" stroke="#777" stroke-opacity=".7" stroke-dasharray="2 1" />
        <path :d="outline" stroke="#fff" stroke-width="3" />
        <path d="M38 35l17 11M102 98l16 5" stroke="#fff" stroke-width="2" />
      </svg>

      <svg class="cross" viewBox="0 0 98 98" width="98" height="98" fill="none" stroke="#d8d8d0" aria-hidden="true">
        <path d="M0 49.500h40M58 49.500h40M49.500 0v40M49.500 58v40M40.500 40.500h18v18h-18z" />
      </svg>

      <div class="cube">
        <button class="face">TOP</button>
        <svg viewBox="0 0 142 14" width="142" height="14" fill="none" aria-hidden="true">
          <path d="M50 1.500C-10 3-10 10 71 11.500S152 3 92 1.500" stroke="#333" stroke-width="2" />
          <path d="M1 5l7-2v3zM12 4l5-1-3 3zM122 4l19 1-12 1z" fill="#aaa" />
          <path d="M60 12v-2h9v2M73 12v-2h8v2" stroke="#bbb" stroke-width="1.500" />
        </svg>
        <button class="ucs">Unnamed<i /></button>
      </div>

      <aside class="navbar">
        <small>×</small>
        <button aria-label="Wheel"><Icon name="wheel" /></button><i />
        <hr>
        <button aria-label="Pan"><Icon name="hand" /></button>
        <button aria-label="Zoom"><Icon name="zoomext" /></button><i />
        <button aria-label="Orbit"><Icon name="orbit" /></button><i />
        <hr>
        <button aria-label="Motion"><Icon name="motion" /></button>
        <small class="last">−</small>
      </aside>

      <div class="axes"><span class="ay">Y</span><span class="corner" /><span class="ax">X</span></div>

      <div class="command">
        <p>Command: _SAVEAS</p>
        <div class="bar">
          <Icon name="grip" />
          <button aria-label="Close"><Icon name="cmdclose" /></button>
          <button aria-label="Customize"><Icon name="wrench" /></button>
          <div class="entry">
            <Icon name="prompt" /><i class="caret" />
            <input type="text" aria-label="Command" placeholder="Type a command">
            <i class="up" />
          </div>
        </div>
      </div>
    </div>

    <footer class="foot-bar">
      <nav class="layouts">
        <button class="on"><span>Model</span></button>
        <button><span>Layout1</span></button>
        <button class="add" aria-label="New layout"><span>+</span></button>
      </nav>
      <div class="status">
        <button class="model">MODEL</button>
        <button v-for="(s, n) in status" :key="n" :class="{ on: s.on }" :style="{ width: s.w + 'px', marginLeft: (s.g || 0) + 'px' }" :aria-label="s.i || 'Options'">
          <Icon v-if="s.i" :name="s.i" /><template v-else-if="s.t">{{ s.t }}<i class="drop" /></template><i v-else class="drop" />
        </button>
      </div>
    </footer>
  </div>
</template>

<style>
body { margin: 0; background: #222933; }
</style>

<style scoped>
* { box-sizing: border-box; }
.app {
  --panel: #3b4453;
  --dark: #222933;
  --text: #e4e6e9;
  display: flex;
  flex-direction: column;
  min-height: 100vh;
  background: var(--dark);
  color: var(--text);
  font: 12px/16px "Open Sans", "Noto Sans", sans-serif;
  overflow: hidden;
}
button, input, select { font: inherit; color: inherit; background: none; border: 0; padding: 0; margin: 0; border-radius: 0; }
button { display: flex; align-items: center; justify-content: center; white-space: nowrap; position: relative; }
svg { display: block; flex: none; }
.caret { flex: none; border: solid transparent; border-width: 3px 3px 0; border-top-color: #d0d3d8; width: 0; }
kbd {
  position: absolute; z-index: 5; height: 14px; min-width: 12px; padding: 0 2px;
  font: 12px/12px "Open Sans", sans-serif; color: #222; background: #f4f4f4;
  border: 1px solid #fff; box-shadow: 1px 1px 2px #000; text-align: center;
}

/* title bar and tabs */
.head { display: flex; height: 45px; }
.logo { width: 44px; padding: 0 4px 4px 0; }
.head-rows { flex: 1; min-width: 0; }
.title-bar { display: flex; height: 27px; }
.quick { display: flex; }
.quick button { width: 24px; height: 24px; align-items: flex-start; padding-top: 3px; }
.quick button.thin { width: 12px; padding-top: 9px; }
.quick kbd { left: 10px; top: 9px; }
.quick .thin:last-child { width: 20px; padding-top: 6px; }
.quick .dim kbd { color: #999; }
.dim .caret { opacity: .5; }
h1 { flex: 1; display: flex; gap: 12px; justify-content: center; margin: 0; font: inherit; line-height: 23px; white-space: nowrap; color: #f0f1f2; }
.account { display: flex; align-items: center; height: 23px; }
.expand { width: 16px; height: 20px; }
.expand i { border: solid transparent; border-width: 4px 0 4px 4px; border-left-color: var(--text); }
.account input { width: 178px; height: 20px; padding: 0 3px; background: #4a5164; font-style: italic; font-size: 11px; }
.account input::placeholder { color: #b4b8bf; opacity: 1; }
.find { width: 27px; }
.sign { gap: 3px; width: 114px; justify-content: flex-start; }
.sign .caret { margin-left: auto; }
.cart { width: 34px; padding-left: 2px; }
.apps { width: 38px; gap: 5px; justify-content: flex-start; }
.help { width: 42px; height: 18px; border-left: 1px solid #444b57; gap: 7px; padding-left: 3px; }
.help b { width: 16px; height: 16px; border-radius: 50%; background: #c9ccd0; color: var(--dark); line-height: 16px; }
.window { display: flex; padding-left: 56px; padding-right: 1px; }
.window button { width: 25px; height: 24px; }
.tabs { display: grid; grid-template-columns: 51px 51px 69px 77px 45px 63px 58px 62px 81px 89px 95px 37px 10px; height: 18px; margin-left: 2px; color: #a4a9b1; }
.tabs button { line-height: 16px; align-items: flex-start; }
.tabs .on { background: var(--panel); color: #f2f3f4; }
.tabs kbd { top: 14px; left: 50%; transform: translateX(-50%); }
.tabs .fold { justify-content: flex-end; align-items: center; }
.tabs .fold-more { align-items: center; }
.fold-box { width: 16px; height: 8px; background: #eceef0; display: flex; align-items: center; justify-content: center; }
.fold-box i { border: solid transparent; border-width: 0 3px 3px; border-bottom-color: #555; }
.tabs .fold kbd { left: 29px; }
.tabs .fold-more kbd { left: 16px; }

/* ribbon */
.ribbon { display: flex; height: 97px; padding: 0 2px; }
.ribbon section { display: flex; flex-direction: column; background: var(--panel); border-right: 1px solid #2b323d; padding-top: 4px; flex: none; }
.body { display: flex; height: 75px; }
.name { height: 18px; gap: 7px; width: 100%; }
.name i { border: solid transparent; border-width: 4px 4px 0; border-top-color: #d0d3d8; }
.big { flex-direction: column; justify-content: flex-start; padding-top: 2px; height: 74px; flex: none; }
.big > svg { height: 32px; margin-bottom: 4px; }
.big .caret { margin-top: 2px; }
.big.two { line-height: 15px; }
.col { display: flex; flex-direction: column; }
.small { height: 24px; gap: 5px; justify-content: flex-start; }
.small .caret { margin-left: auto; }
.combo { display: flex; align-items: center; height: 22px; background: #4f5a6d; border: 1px solid #2b323d; position: relative; }
.combo::after { content: ""; position: absolute; right: 1px; top: 8px; border: solid transparent; border-width: 4px 4px 0; border-top-color: #dfe1e4; }
.combo select { appearance: none; flex: 1; height: 20px; min-width: 0; }
.swatch { width: 14px; height: 14px; background: #fff; outline: 1px solid #222; flex: none; }

.draw { width: 224px; }
.draw .big:nth-child(1) { width: 42px; }
.draw .big:nth-child(2) { width: 44px; }
.draw .big:nth-child(3) { width: 55px; }
.draw .big:nth-child(4) { width: 38px; }
.draw .col { width: 30px; margin-left: 6px; }
.modify { width: 250px; }
.modify .body { padding-left: 6px; }
.modify .col:nth-child(1) { width: 73px; }
.modify .col:nth-child(2) { width: 69px; }
.modify .col:nth-child(3) { width: 61px; margin-right: 13px; }
.annotation { width: 189px; }
.annotation .big:nth-child(1) { width: 48px; }
.annotation .big:nth-child(2) { width: 56px; }
.annotation .big > svg { overflow: visible; }
.annotation .col { width: 70px; margin-left: 8px; }
.annotation .small { gap: 4px; }
.layers { width: 273px; }
.layers .big { width: 62px; }
.layers .col { width: 209px; }
.layer-combo { gap: 5px; padding-left: 6px; margin: 1px 0; }
.layer-combo .swatch { margin-right: 1px; }
.tools { display: flex; gap: 8px; padding-left: 4px; }
.block { width: 161px; }
.block .big { width: 42px; margin-right: 3px; }
.block .col { width: 107px; }
.properties { width: 265px; }
.properties .big { width: 64px; }
.props { display: grid; grid-template-columns: 18px 180px; grid-auto-rows: 24px; align-items: center; }
.props .swatch { margin-left: 12px; outline: 0; width: 16px; height: 16px; }
.props .color { margin-left: 10px; }
.stroke { width: 64px; height: 1px; background: #fff; margin: 0 2px 0 3px; }
.wheel { width: 16px; height: 16px; border-radius: 50%; background: conic-gradient(#f6b23c 0 16%, #f2623f 0 33%, #e84f6b 0 45%, #7b5be0 0 58%, #3f9be8 0 75%, #4ecb71 0 88%, #c7d94a 0); }
.foot { display: flex; position: relative; }
.properties .name { padding-right: 12px; }
.launch { position: absolute; right: 5px; top: 6px; }
.groups { width: 69px; }
.groups .name { gap: 5px; }
.groups .big { width: 42px; }
.groups .small { width: 24px; padding-left: 4px; }
.groups .small.on { background: #355878; outline: 1px solid #76b6e8; outline-offset: -1px; }
.utilities { width: 97px; }
.utilities .big { width: 71px; }
.utilities .small, .clipboard .small { width: 24px; justify-content: center; }
.clipboard { width: 80px; }
.clipboard .big { width: 54px; }
.ribbon .view { flex: 1; border: 0; }
.view .big { width: 62px; padding-top: 8px; }
.view .foot { align-self: flex-start; gap: 6px; padding-left: 5px; }
.view .launch { position: static; }

/* file tabs */
.files { display: flex; height: 31px; padding: 5px 0 0 15px; border-bottom: 4px solid var(--panel); }
.file { height: 22px; justify-content: flex-start; padding-left: 16px; padding-top: 1px; z-index: 0; color: #b6bac1; gap: 5px; }
.file::before, .file::after { content: ""; position: absolute; top: 0; bottom: 0; width: 60%; background: #2d3541; z-index: -1; }
.file::before { left: 4px; transform: skewX(-18deg); border-radius: 8px 0 0 0; }
.file::after { right: 4px; transform: skewX(18deg); border-radius: 0 8px 0 0; }
.file.start { width: 127px; }
.file.on { width: 182px; padding-left: 13px; color: #f0f1f2; }
.file.on::before, .file.on::after { background: var(--panel); }
.file em { font: 14px/16px "DejaVu Sans", sans-serif; color: #a8adb5; }
.file.add { width: 20px; padding: 0; justify-content: center; }
.file.add::before, .file.add::after { top: 5px; bottom: 3px; }
.add span { font-size: 17px; font-weight: 600; line-height: 12px; color: #a8adb5; }

/* drawing area */
.canvas { flex: 1; position: relative; background: #000; min-height: 600px; border-bottom: 1px solid #4a4e54; }
.canvas-top { display: flex; justify-content: space-between; padding: 6px 10px 0 3px; }
.view-window { display: flex; gap: 8px; padding-top: 2px; }
.flag { position: absolute; left: 860px; top: 162px; }
.cross { position: absolute; left: 1182px; top: 492px; }
.cube { position: absolute; right: 12px; top: 80px; width: 142px; display: flex; flex-direction: column; align-items: center; }
.face { width: 52px; height: 52px; background: #a2a2a2; color: #3f4246; font: 700 14px/16px Roboto, sans-serif; z-index: 0; }
.face::before { content: ""; position: absolute; inset: 10px; background: #989a9e; z-index: -1; }
.cube svg { margin-top: -3px; }
.ucs { width: 68px; height: 18px; margin-top: 50px; background: #8c8c98; border: 1px solid #a8a8b0; border-radius: 4px; color: #34343e; gap: 6px; font-size: 11px; }
.ucs i { border: solid transparent; border-width: 4px 4px 0; border-top-color: #a8a8b4; }
.navbar { position: absolute; right: 4px; top: 236px; width: 32px; height: 212px; background: #434343; border-radius: 3px; display: flex; flex-direction: column; align-items: center; }
.navbar small { align-self: flex-end; width: 8px; height: 8px; margin: 1px 2px 9px; border: 1px solid #2b2b2b; border-radius: 50%; font-size: 8px; line-height: 6px; text-align: center; color: #2b2b2b; }
.navbar .last { margin: auto 2px 2px; }
.navbar > i { border: solid transparent; border-width: 3px 3px 0; border-top-color: #2b2b2b; margin: 6px 0 5px; }
.navbar hr { width: 24px; height: 1px; border: 0; background: #555; margin: 0 0 4px; }
.navbar button + button { margin-top: 3px; }
.axes { position: absolute; left: 16px; bottom: 15px; width: 70px; height: 70px; color: #e8e8e0; font: 300 18px/18px "Inter", sans-serif; }
.corner { position: absolute; left: 0; bottom: 1px; width: 51px; height: 51px; border: solid #e8e8e0; border-width: 0 0 1px 1px; }
.ay { position: absolute; left: 2px; top: -1px; }
.ax { position: absolute; right: 2px; bottom: 0; }
.command { position: absolute; left: 392px; right: 393px; bottom: 1px; font: 12px/15px "DejaVu Sans Mono", monospace; }
.command p { display: inline-block; margin: 0 0 2px 62px; padding: 0 2px; background: #1b1b1b; color: #5a5a5a; border-radius: 2px; }
.bar { display: flex; align-items: center; height: 26px; background: #222630; border-radius: 3px; padding-left: 4px; }
.bar > button { width: 22px; height: 26px; }
.bar > button:nth-of-type(1) { width: 20px; }
.entry { flex: 1; display: flex; align-items: center; height: 26px; margin-left: 4px; padding: 0 4px; gap: 3px; background: #b2b2b2; border-radius: 2px; }
.entry .caret { border-width: 4px 4px 0; border-top-color: #333; }
.entry input { flex: 1; margin-left: 2px; font-style: italic; }
.entry input::placeholder { color: #4c4c4c; opacity: 1; }
.up { border: solid transparent; border-width: 0 4px 4px; border-bottom-color: #444; }

/* status bar */
.foot-bar { display: flex; justify-content: space-between; height: 29px; padding: 0 2px 0 12px; }
.layouts { display: flex; gap: 2px; }
.layouts button { height: 17px; width: 64px; color: #9a9fa8; z-index: 0; }
.layouts button span { line-height: 14px; padding-bottom: 1px; }
.layouts .on { width: 58px; font-weight: 700; color: #f4f5f6; }
.layouts button::before, .layouts button::after { content: ""; position: absolute; top: 0; bottom: 0; width: 60%; z-index: -1; background: #2c343f; }
.layouts button::before { left: 2px; transform: skewX(18deg); border-radius: 0 0 0 5px; }
.layouts button::after { right: 2px; transform: skewX(-18deg); border-radius: 0 0 5px 0; }
.layouts .on::before, .layouts .on::after { background: var(--panel); }
.layouts .add { width: 24px; }
.layouts .add::before { transform: skewX(-18deg); }
.status { display: flex; padding-top: 1px; }
.status button { height: 23px; background: var(--panel); gap: 4px; flex: none; }
.status .model { width: 47px; font-size: 12px; }
.status .on { background: #5e8fc4; }
.drop { border: solid transparent; border-width: 4px 4px 0; border-top-color: #dfe1e4; }
</style>
